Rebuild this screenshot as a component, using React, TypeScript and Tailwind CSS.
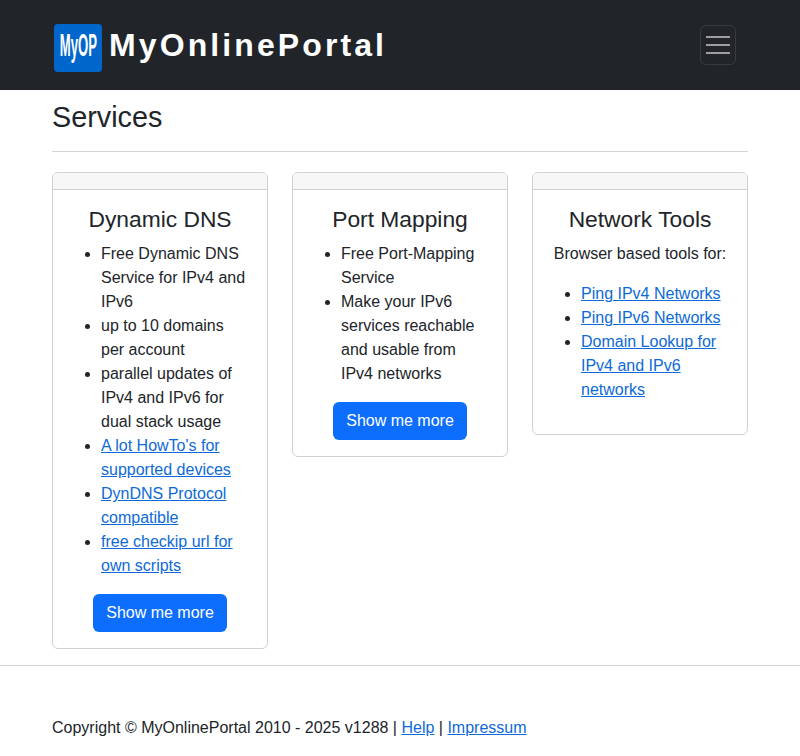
const linkClass = "text-[#0d6ad8] underline";

function Card({ title, children }: { title: string; children: React.ReactNode }) {
  return (
    <div className="flex-1 border border-[#d0d0d0] rounded-md overflow-hidden">
      <div className="h-[17px] bg-[#f7f7f7] border-b border-[#d0d0d0]" />
      <div className="p-4">
        <h4 className="text-[22.8px] leading-[27px] text-center mb-[9.8px]">{title}</h4>
        {children}
      </div>
    </div>
  );
}

function MoreButton() {
  return (
    <div className="text-center">
      <a className="inline-block bg-[#0d6efd] text-white rounded-md px-[13px] py-[7px]">Show me more</a>
    </div>
  );
}

export default function App() {
  return (
    <div className="min-h-[756px] bg-white text-[#212529] text-base leading-6 font-['Liberation_Sans',Arial,sans-serif]">
      <nav className="h-[90px] bg-[#212529] flex items-center justify-between pl-[54px] pr-[64px]">
        <div className="flex items-center gap-[7px]">
          <div className="mt-1.5 w-12 h-12 rounded-[4px] bg-[#0066cc] flex items-center justify-center overflow-hidden">
            <span className="-mt-1.5 shrink-0 text-white font-bold text-[32px] leading-none scale-x-[0.41] whitespace-nowrap">MyOP</span>
          </div>
          <span className="text-white font-bold text-[32px] leading-9 tracking-[3.1px]">MyOnlinePortal</span>
        </div>
        <button className="w-9 h-10 border border-white/10 rounded-md flex flex-col items-center justify-center gap-1.5">
          <span className="block w-6 h-0.5 bg-white/55" />
          <span className="block w-6 h-0.5 bg-white/55" />
          <span className="block w-6 h-0.5 bg-white/55" />
        </button>
      </nav>

      <main className="px-[52px] pt-[11px]">
        <h3 className="text-[28.8px] leading-[33.6px] font-normal">Services</h3>
        <hr className="mt-4 mb-5 border-t border-[#d3d4d4]" />
        <div className="flex items-start gap-6">
          <Card title="Dynamic DNS">
            <ul className="list-disc pl-8 mb-4">
              <li>Free Dynamic DNS Service for IPv4 and IPv6</li>
              <li>up to 10 domains per account</li>
              <li>parallel updates of IPv4 and IPv6 for dual stack usage</li>
              <li><a className={linkClass}>A lot HowTo's for supported devices</a></li>
              <li><a className={linkClass}>DynDNS Protocol compatible</a></li>
              <li><a className={linkClass}>free checkip url for own scripts</a></li>
            </ul>
            <MoreButton />
          </Card>
          <Card title="Port Mapping">
            <ul className="list-disc pl-8 mb-4">
              <li>Free Port-Mapping Service</li>
              <li>Make your IPv6 services reachable and usable from IPv4 networks</li>
            </ul>
            <MoreButton />
          </Card>
          <Card title="Network Tools">
            <p className="text-center mb-4">Browser based tools for:</p>
            <ul className="list-disc pl-8 mb-4">
              <li><a className={linkClass}>Ping IPv4 Networks</a></li>
              <li><a className={linkClass}>Ping IPv6 Networks</a></li>
              <li><a className={linkClass}>Domain Lookup for IPv4 and IPv6 networks</a></li>
            </ul>
          </Card>
        </div>
      </main>

      <hr className="mt-4 border-t border-[#d3d4d4]" />
      <footer className="px-[52px] pt-[50px] pb-4">
        Copyright © MyOnlinePortal 2010 - 2025 v1288 | <a className={linkClass}>Help</a> | <a className={linkClass}>Impressum</a>
      </footer>
    </div>
  );
}
